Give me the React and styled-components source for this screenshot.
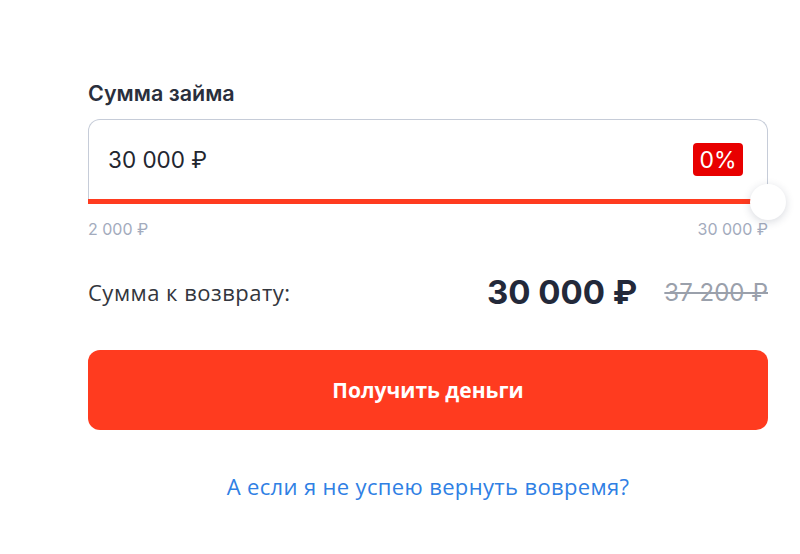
import React from "react";
import styled, { createGlobalStyle } from "styled-components";

const GlobalStyle = createGlobalStyle`
    body {
        margin: 0;
        background: #FFFFFF;
        font-family: 'Open Sans', 'Noto Sans', sans-serif;
    }
`;

const Page = styled("div")`
    width: 680px;
    padding: 79px 0 0 88px;
`;

const Title = styled("div")`
    font-family: 'Inter', sans-serif;
    font-weight: 600;
    font-size: 21.5px;
    line-height: 28px;
    color: #2a2f3c;
    margin-bottom: 12px;
`;

const Slider = styled("div")`
    position: relative;
`;

const Field = styled("div")`
    box-sizing: border-box;
    height: 80px;
    border: 1px solid #c6ccd8;
    border-bottom: none;
    border-radius: 12px 12px 0 0;
    display: flex;
    align-items: center;
    justify-content: space-between;
    padding: 0 24px 0 19px;
`;

const Value = styled("div")`
    font-family: 'Inter', sans-serif;
    font-size: 22.5px;
    color: #23262f;
`;

const Badge = styled("div")`
    width: 50px;
    height: 33px;
    border-radius: 4px;
    background: #e80000;
    color: #FFFFFF;
    font-family: 'Inter', sans-serif;
    font-size: 23px;
    display: flex;
    align-items: center;
    justify-content: center;
`;

const Track = styled("div")`
    height: 5px;
    background: #ff3b1f;
`;

const Thumb = styled("div")`
    position: absolute;
    right: -18px;
    bottom: -16px;
    width: 36px;
    height: 36px;
    border-radius: 50%;
    background: #FFFFFF;
    box-shadow: 0 2px 8px rgba(40, 50, 80, 0.18);
`;

const Limits = styled("div")`
    display: flex;
    justify-content: space-between;
    margin-top: 15px;
    font-family: 'Inter', sans-serif;
    font-size: 16px;
    line-height: 20px;
    color: #a3abbd;
`;

const ReturnRow = styled("div")`
    display: flex;
    align-items: center;
    height: 44px;
    margin-top: 31px;
`;

const ReturnLabel = styled("div")`
    flex: 1;
    font-size: 22px;
    letter-spacing: 0.5px;
    color: #33363d;
`;

const ReturnSum = styled("div")`
    font-family: 'Inter', sans-serif;
    font-weight: 700;
    font-size: 33px;
    color: #23293a;
`;

const OldSum = styled("div")`
    margin-left: 27px;
    font-family: 'Inter', sans-serif;
    font-size: 24px;
    color: #9aa0ab;
    text-decoration: line-through;
`;

const Button = styled("button")`
    display: block;
    width: 100%;
    height: 80px;
    margin-top: 36px;
    border: none;
    border-radius: 12px;
    background: #ff3b1f;
    color: #FFFFFF;
    font-family: 'Open Sans', sans-serif;
    font-weight: 700;
    font-size: 21px;
    cursor: pointer;
`;

const HelpLink = styled("a")`
    display: block;
    margin-top: 42px;
    text-align: center;
    font-size: 22px;
    letter-spacing: 0.35px;
    line-height: 28px;
    color: #2f80e4;
    text-decoration: none;
    cursor: pointer;
`;

export default function App() {
    return (
        <>
            <GlobalStyle />
            <Page>
                <Title>Сумма займа</Title>
                <Slider>
                    <Field>
                        <Value>30 000 ₽</Value>
                        <Badge>0%</Badge>
                    </Field>
                    <Track />
                    <Thumb />
                </Slider>
                <Limits>
                    <span>2 000 ₽</span>
                    <span>30 000 ₽</span>
                </Limits>
                <ReturnRow>
                    <ReturnLabel>Сумма к возврату:</ReturnLabel>
                    <ReturnSum>30 000 ₽</ReturnSum>
                    <OldSum>37 200 ₽</OldSum>
                </ReturnRow>
                <Button>Получить деньги</Button>
                <HelpLink>А если я не успею вернуть вовремя?</HelpLink>
            </Page>
        </>
    );
}
